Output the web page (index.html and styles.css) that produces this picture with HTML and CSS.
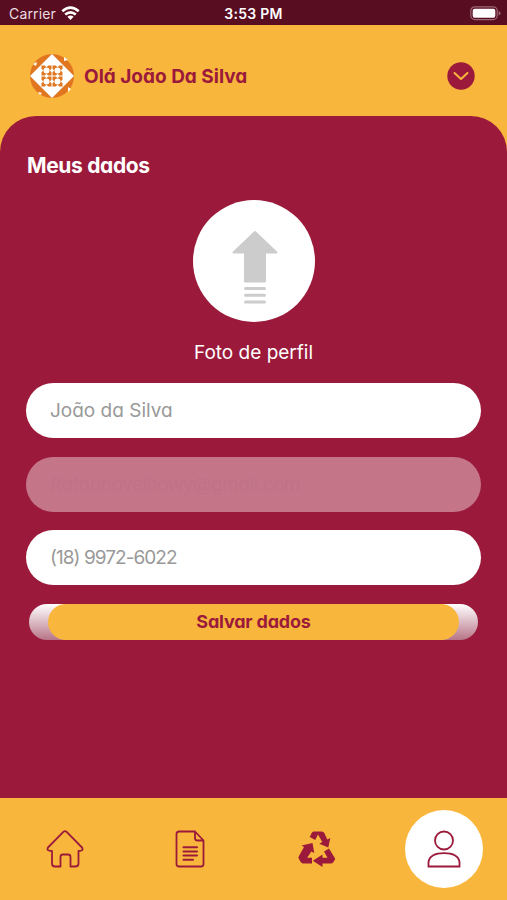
FILE: index.html
```html
<!DOCTYPE html>
<html lang="pt-BR">
<head>
<meta charset="utf-8">
<meta name="viewport" content="width=device-width, initial-scale=1">
<title>Meus dados</title>
<link rel="stylesheet" href="styles.css">
</head>
<body>
<div class="app">
  <div class="status">
    <div class="carrier"><span>Carrier</span>
      <svg width="19" height="15" viewBox="0 0 19 15" fill="none" stroke="#fff" stroke-width="2.6"><path d="M1.3 5.2Q9.500-2 17.700 5.200M4.200 8.600q5.300-4.600 10.600 0"/><path d="M6.400 10.800q3.100-2.600 6.200 0L9.500 14z" fill="#fff" stroke="none"/></svg>
    </div>
    <span class="time">3:53 PM</span>
    <svg class="battery" width="31" height="15" viewBox="0 0 31 15"><rect x=".8" y=".8" width="26.4" height="12.8" rx="4" fill="none" stroke="#9b6876" stroke-width="1.2"/><rect x="2.7" y="2.7" width="22.6" height="9" rx="2" fill="#fff"/><path d="M28.600 5v4.600q2-.8 2-2.300t-2-2.300z" fill="#9b6876"/></svg>
  </div>
  <header class="header">
    <svg class="avatar" width="44" height="44" viewBox="0 0 44 44">
      <circle cx="22" cy="22" r="22" fill="#e07720"/>
      <path d="M22 0 44 22 22 44 0 22z" fill="#fff"/>
      <path d="M3 10l4-2-1 4zM34 3l4 3-4 1zM8 38l4 1-2 2zM38 33l3 2-3 3z" fill="#fff"/>
      <defs><g id="tile"><path d="M0 0h3.200L5 1.800 6.800 0H10v3.200L8.200 5 10 6.800V10H6.800L5 8.200 3.200 10H0V6.800L1.800 5 0 3.200z" fill="#e07720"/><circle cx="5" cy="5" r="3" fill="#fff"/></g></defs>
      <use href="#tile" x="11.5" y="11.5"/><use href="#tile" x="22.5" y="11.5"/><use href="#tile" x="11.5" y="22.5"/><use href="#tile" x="22.5" y="22.5"/>
    </svg>
    <span class="hello">Olá João Da Silva</span>
    <svg class="toggle" width="28" height="28" viewBox="0 0 28 28"><circle cx="14" cy="14" r="13.7" fill="#9b1a3b"/><path d="M7.500 11l6.500 6 6.500-6" fill="none" stroke="#f9b63c" stroke-width="2" stroke-linecap="round" stroke-linejoin="round"/></svg>
  </header>
  <main class="panel">
    <h1 class="title">Meus dados</h1>
    <div class="photo">
      <svg width="46" height="76" viewBox="0 0 46 76" fill="#ccc" stroke="#ccc" stroke-linecap="round" stroke-linejoin="round"><path d="M23 2 44.500 22.500H33V51.500H13V22.500H1.500z" stroke-width="2"/><path d="M13.500 58.500h19M13.500 65.200h19M13.500 72h19" stroke-width="3"/></svg>
    </div>
    <p class="caption">Foto de perfil</p>
    <div class="field"><span class="name">João da Silva</span></div>
    <div class="field disabled"><span class="email">Rafaanovelhowy@gmail.com</span></div>
    <div class="field"><span class="phone">(18) 9972-6022</span></div>
    <div class="save"><div class="save-label"><span>Salvar dados</span></div></div>
  </main>
  <nav class="nav">
    <div class="item home"><svg width="38" height="38" viewBox="0 0 38 38" fill="none" stroke="#9b1a3b" stroke-width="1.8" stroke-linejoin="round"><path d="M17.600 1.700q1.400-1.100 2.800 0L36 17.500q2 3.500-3.500 3.500V33.500q0 3-3 3H24.500V27q0-2.500-2.500-2.500H17q-2.500 0-2.500 2.500v9.500H9q-3 0-3-3V21Q0 21 2 17.500z"/></svg></div>
    <div class="item"><svg width="30" height="38" viewBox="0 0 30 38" fill="none" stroke="#9b1a3b" stroke-width="1.8" stroke-linejoin="round" stroke-linecap="round"><path d="M4 1.500H20L28.500 10.500V34q0 2.500-2.500 2.500H4q-2.500 0-2.500-2.500V4q0-2.500 2.500-2.500zM20 1.500V8q0 2.500 2.500 2.500h6"/><path d="M8.500 17.200h13.500M8.500 21.400h13.500M8.500 25.600h13.500M8.500 29.800h9.500" stroke-width="2"/></svg></div>
    <div class="item"><svg width="38" height="38" viewBox="0 0 38 38" fill="#9b1a3b"><path d="M15.500 1.500h8.500q1.500 0 2.300 1.500l3 6.500 3-1.500-2 9.500-9-3.800 3-1.600-4.300-7.600-2.800 5.500-5.500-3 2-4q.6-1.500 1.800-1.500z"/><path d="M3.500 15.500 14.500 13l1.800 10-3-1.600L9.200 27.800H14v5.700H5q-1.500 0-2.300-1.400L.8 28.800q-.7-1.300 0-2.600L6 17z"/><path d="M31 18.500l5.800 9.500q.6 1 0 2l-1.600 2.300q-.8 1.200-2.200 1.200H24.500V37L14.800 30.700 24.500 24.500v3.300h5L26 21.500z"/></svg></div>
    <div class="item active"><svg width="34" height="38" viewBox="0 0 34 38" fill="none" stroke="#9b1a3b" stroke-width="1.8"><circle cx="17" cy="10.500" r="9"/><path d="M1.500 36.500V32C2.500 26 9 23.200 17 23.200S31.500 26 32.500 32v4.500z"/></svg></div>
  </nav>
</div>
</body>
</html>
```
FILE: styles.css
```css
* { box-sizing: border-box; }
body { margin: 0; font-family: Inter, "Open Sans", sans-serif; }
.app { width: 507px; height: 900px; display: flex; flex-direction: column; background: #f9b63c; overflow: hidden; }
svg { display: block; flex: none; }
.status { height: 25px; flex: none; background: #590d20; color: #fff; display: grid; grid-template-columns: 1fr auto 1fr; align-items: center; padding: 2px 6px 0 9px; font-size: 14px; }
.carrier { display: flex; align-items: center; gap: 5px; color: #eadde0; letter-spacing: .15px; }
.time { font-weight: 600; font-size: 14px; letter-spacing: .3px; margin-right: 3px; }
.battery { justify-self: end; }
.header { height: 91px; flex: none; display: flex; align-items: center; padding: 10px 32px 0 30px; color: #9b1a3b; }
.hello { margin-left: 10px; padding-top: 1px; font-size: 19px; font-weight: 700; white-space: nowrap; }
.toggle { margin-left: auto; }
.hello, .panel { font-feature-settings: "cv11", "ss03"; }
.panel { flex: 1; min-height: 0; background: #9b1a3b; color: #fff; border-radius: 36px 36px 0 0; padding: 37px 26px 0; }
.title { margin: 0; font-size: 21px; line-height: 26px; font-weight: 650; padding-left: 1px; letter-spacing: -.35px; }
.photo { width: 122px; height: 122px; margin: 21px auto 0; border-radius: 50%; background: #fff; display: flex; justify-content: center; padding: 30px 0 0 2px; }
.caption { margin: 18px 0; line-height: 25px; font-size: 19px; text-align: center; }
.field { height: 55px; border-radius: 28px; margin-bottom: 18.5px; padding: 0 24px; background: #fff; color: #999; display: flex; align-items: center; font-size: 19px; white-space: nowrap; }
.disabled { background: #c47688; color: #c07287; }
.email { letter-spacing: -.5px; }
.phone { letter-spacing: -.95px; }
.save { height: 36px; margin: 0 3px; padding: 0 19px; border-radius: 18px; background: linear-gradient(#fff, #b77588); }
.save-label { height: 36px; border-radius: 18px; background: #f9b63c; color: #9b1a3b; display: flex; align-items: center; justify-content: center; font-size: 18px; font-weight: 700; letter-spacing: -.2px; }
.nav { height: 102px; flex: none; display: grid; grid-template-columns: repeat(4, 1fr); align-items: center; }
.item { display: flex; align-items: center; justify-content: center; }
.home { padding-left: 3px; }
.active { width: 78px; height: 78px; border-radius: 50%; background: #fff; justify-self: center; }
```
